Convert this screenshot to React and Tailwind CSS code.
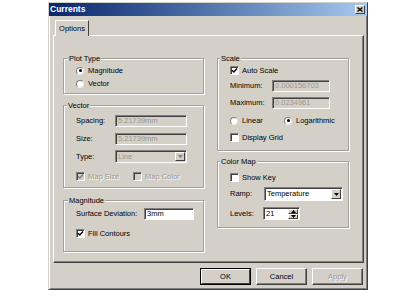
import React from "react";

const Check = ({ checked, disabled }) => (
  <span
    className={`w-[9px] h-[9px] shrink-0 border border-t-[#808080] border-l-[#808080] border-r-white border-b-white shadow-[inset_1px_1px_0_#404040] flex items-center justify-center ${disabled ? "bg-[#d4d0c8]" : "bg-white"}`}
  >
    {checked && (
      <svg width="7" height="7" viewBox="0 0 7 7">
        <path d="M1 3.2 L2.8 5 L6 1.5" stroke={disabled ? "#808080" : "#000"} strokeWidth="1.4" fill="none" />
      </svg>
    )}
  </span>
);

const Radio = ({ on }) => (
  <span className="w-[8px] h-[8px] shrink-0 rounded-full bg-white border border-t-[#808080] border-l-[#808080] border-r-[#e8e8e8] border-b-[#e8e8e8] flex items-center justify-center">
    {on && <span className="w-[3px] h-[3px] rounded-full bg-black" />}
  </span>
);

const Field = ({ value, disabled, w }) => (
  <div
    className={`h-[12px] ${w} border border-t-[#808080] border-l-[#808080] border-r-white border-b-white shadow-[inset_1px_1px_0_#404040] flex items-center pl-[2px] leading-none ${disabled ? "bg-[#d4d0c8] text-[#9a988f]" : "bg-white text-black"}`}
  >
    {value}
  </div>
);

const Arrow = ({ disabled }) => (
  <div className="w-[10px] h-full bg-[#d4d0c8] border border-t-white border-l-white border-r-[#404040] border-b-[#404040] flex items-center justify-center">
    <svg width="5" height="3" viewBox="0 0 5 3">
      <path d="M0 0 H5 L2.5 3 Z" fill={disabled ? "#808080" : "#000"} />
    </svg>
  </div>
);

const Select = ({ value, disabled, w, h }) => (
  <div
    className={`${h} ${w} border border-t-[#808080] border-l-[#808080] border-r-white border-b-white shadow-[inset_1px_1px_0_#404040] flex items-stretch leading-none ${disabled ? "bg-[#d4d0c8] text-[#9a988f]" : "bg-white text-black"}`}
  >
    <div className="flex-1 flex items-center pl-[2px]">{value}</div>
    <div className="py-[1px] pr-[1px]">
      <Arrow disabled={disabled} />
    </div>
  </div>
);

const Group = ({ label, h, children, lx }) => (
  <div
    className={`${h} flex flex-col border border-[#a3a09a] shadow-[1px_1px_0_#ffffff,inset_1px_1px_0_#ffffff]`}
  >
    <span className={`-mt-[5px] ${lx} self-start px-[1px] h-[9px] leading-[9px] bg-[#d4d0c8]`}>{label}</span>
    {children}
  </div>
);

const Btn = ({ children, def, disabled }) => (
  <div
    className={`w-[51px] h-[17px] flex items-center justify-center bg-[#d4d0c8] border ${def ? "border-black" : "border-t-white border-l-white border-r-[#404040] border-b-[#404040]"}`}
  >
    <div
      className={`w-full h-full flex items-center justify-center ${def ? "border border-t-white border-l-white border-r-[#404040] border-b-[#404040]" : "shadow-[inset_-1px_-1px_0_#808080]"} ${disabled ? "text-[#9a988f] [text-shadow:1px_1px_0_#fff]" : "text-black"}`}
    >
      {children}
    </div>
  </div>
);

export default function App() {
  return (
    <div
      className="w-[409px] h-[304px] bg-white pl-[48px] pt-[2px] text-[7.5px] text-black"
      style={{ fontFamily: '"Liberation Sans", Arial, sans-serif' }}
    >
      <div className="w-[320px] h-[288px] flex flex-col bg-[#d4d0c8] border border-t-[#d4d0c8] border-l-[#d4d0c8] border-r-[#404040] border-b-[#404040] shadow-[inset_1px_1px_0_#fff,inset_-1px_-1px_0_#808080]">
        {/* title bar */}
        <div className="h-[13px] flex items-center justify-between bg-gradient-to-r from-[#0a246a] to-[#a6caf0] pl-[1px] pr-[2px]">
          <span className="text-white font-bold text-[8.5px] leading-none">Currents</span>
          <div className="w-[10px] h-[9px] bg-[#d4d0c8] border border-t-white border-l-white border-r-[#404040] border-b-[#404040] flex items-center justify-center">
            <svg width="6" height="5" viewBox="0 0 6 5">
              <path d="M0.5 0.5 L5.5 4.5 M5.5 0.5 L0.5 4.5" stroke="#000" strokeWidth="1.3" />
            </svg>
          </div>
        </div>

        {/* body */}
        <div className="flex-1 flex flex-col pl-[4px] pr-[3px] pt-[4px] pb-[4px]">
          <div className="ml-[2px] w-[34px] h-[16px] -mb-[1px] relative z-10 bg-[#d4d0c8] border-t border-l border-r border-t-white border-l-white border-r-[#404040] flex items-center justify-center leading-none">
            Options
          </div>
          <div className="h-[228px] border border-t-white border-l-white border-r-[#404040] border-b-[#404040] shadow-[inset_-1px_-1px_0_#808080] flex pl-[9px] pt-[22px]">
            {/* left column */}
            <div className="w-[141px] flex flex-col">
              <Group label="Plot Type" h="h-[36px]" lx="ml-[4px]">
                <div className="pl-[12px] flex flex-col">
                  <div className="mt-[2px] h-[11px] flex items-center gap-[4px]">
                    <Radio on />
                    <span>Magnitude</span>
                  </div>
                  <div className="mt-[2px] h-[11px] flex items-center gap-[4px]">
                    <Radio />
                    <span>Vector</span>
                  </div>
                </div>
              </Group>
              <div className="mt-[11px]">
                <Group label="Vector" h="h-[83px]" lx="ml-[3px]">
                  <div className="pl-[12px] flex flex-col">
                    <div className="mt-[5px] h-[12px] flex items-center">
                      <span className="w-[39px]">Spacing:</span>
                      <Field value="5.21739mm" disabled w="w-[72px]" />
                    </div>
                    <div className="mt-[6px] h-[12px] flex items-center">
                      <span className="w-[39px]">Size:</span>
                      <Field value="5.21739mm" disabled w="w-[72px]" />
                    </div>
                    <div className="mt-[5px] h-[13px] flex items-center">
                      <span className="w-[39px]">Type:</span>
                      <Select value="Line" disabled w="w-[72px]" h="h-[13px]" />
                    </div>
                    <div className="mt-[8px] h-[11px] flex items-center text-[#9a988f] [text-shadow:1px_1px_0_#fff]">
                      <div className="w-[57px] flex items-center gap-[3px]">
                        <Check checked disabled />
                        <span>Map Size</span>
                      </div>
                      <div className="flex items-center gap-[3px]">
                        <Check disabled />
                        <span>Map Color</span>
                      </div>
                    </div>
                  </div>
                </Group>
              </div>
              <div className="mt-[12px]">
                <Group label="Magnitude" h="h-[52px]" lx="ml-[4px]">
                  <div className="pl-[12px] flex flex-col">
                    <div className="mt-[3px] h-[12px] flex items-center">
                      <span className="w-[68px]">Surface Deviation:</span>
                      <Field value="3mm" w="w-[50px]" />
                    </div>
                    <div className="mt-[8px] h-[11px] flex items-center gap-[3px]">
                      <Check checked />
                      <span>Fill Contours</span>
                    </div>
                  </div>
                </Group>
              </div>
            </div>

            {/* right column */}
            <div className="ml-[13px] w-[132px] flex flex-col">
              <Group label="Scale" h="h-[93px]" lx="ml-[2px]">
                <div className="pl-[12px] flex flex-col">
                  <div className="mt-[2px] h-[11px] flex items-center gap-[3px]">
                    <Check checked />
                    <span>Auto Scale</span>
                  </div>
                  <div className="mt-[4px] h-[12px] flex items-center">
                    <span className="w-[42px]">Minimum:</span>
                    <Field value="0.000156703" disabled w="w-[58px]" />
                  </div>
                  <div className="mt-[5px] h-[12px] flex items-center">
                    <span className="w-[42px]">Maximum:</span>
                    <Field value="0.0234961" disabled w="w-[58px]" />
                  </div>
                  <div className="mt-[6px] h-[11px] flex items-center">
                    <div className="w-[54px] flex items-center gap-[4px]">
                      <Radio />
                      <span>Linear</span>
                    </div>
                    <div className="flex items-center gap-[4px]">
                      <Radio on />
                      <span>Logarithmic</span>
                    </div>
                  </div>
                  <div className="mt-[6px] h-[11px] flex items-center gap-[3px]">
                    <Check />
                    <span>Display Grid</span>
                  </div>
                </div>
              </Group>
              <div className="mt-[10px]">
                <Group label="Color Map" h="h-[67px]" lx="ml-[2px]">
                  <div className="pl-[12px] flex flex-col">
                    <div className="mt-[6px] h-[11px] flex items-center gap-[3px]">
                      <Check />
                      <span>Show Key</span>
                    </div>
                    <div className="mt-[4px] h-[14px] flex items-center">
                      <span className="w-[34px]">Ramp:</span>
                      <Select value="Temperature" w="w-[79px]" h="h-[14px]" />
                    </div>
                    <div className="mt-[6px] h-[13px] flex items-center">
                      <span className="w-[33px]">Levels:</span>
                      <div className="h-[13px] w-[37px] border border-t-[#808080] border-l-[#808080] border-r-white border-b-white shadow-[inset_1px_1px_0_#404040] bg-white flex items-stretch">
                        <div className="flex-1 flex items-center pl-[2px] leading-none">21</div>
                        <div className="w-[11px] py-[1px] pr-[1px] flex flex-col">
                          <div className="flex-1 bg-[#d4d0c8] border border-t-white border-l-white border-r-[#404040] border-b-[#404040] flex items-center justify-center">
                            <svg width="5" height="3" viewBox="0 0 5 3">
                              <path d="M0 3 H5 L2.5 0 Z" fill="#000" />
                            </svg>
                          </div>
                          <div className="flex-1 bg-[#d4d0c8] border border-t-white border-l-white border-r-[#404040] border-b-[#404040] flex items-center justify-center">
                            <svg width="5" height="3" viewBox="0 0 5 3">
                              <path d="M0 0 H5 L2.5 3 Z" fill="#000" />
                            </svg>
                          </div>
                        </div>
                      </div>
                    </div>
                  </div>
                </Group>
              </div>
            </div>
          </div>

          {/* buttons */}
          <div className="mt-[5px] flex justify-end gap-[5px] pr-[1px]">
            <Btn def>OK</Btn>
            <Btn>Cancel</Btn>
            <Btn disabled>Apply</Btn>
          </div>
        </div>
      </div>
    </div>
  );
}
